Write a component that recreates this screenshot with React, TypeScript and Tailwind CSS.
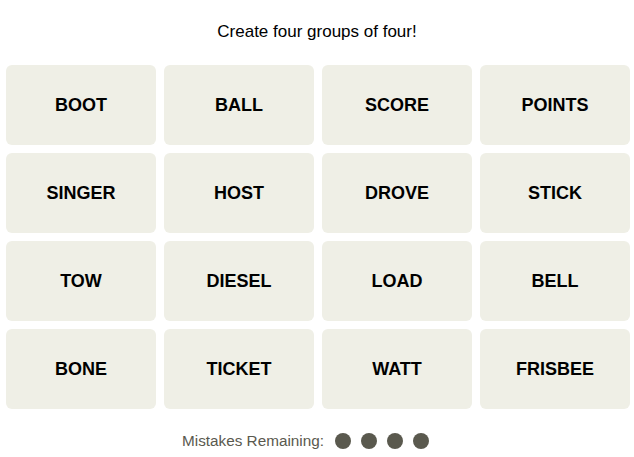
import React from 'react';

const WORDS = [
  'BOOT', 'BALL', 'SCORE', 'POINTS',
  'SINGER', 'HOST', 'DROVE', 'STICK',
  'TOW', 'DIESEL', 'LOAD', 'BELL',
  'BONE', 'TICKET', 'WATT', 'FRISBEE',
];

export default function App() {
  return (
    <div className="w-[634px] h-[457px] bg-white flex flex-col items-center font-['Liberation_Sans',Arial,sans-serif]">
      <p className="mt-[21px] h-[22px] text-[17px] leading-[22px] text-black">Create four groups of four!</p>

      <div className="mt-[22px] self-start ml-[6px] grid grid-cols-4 gap-2 w-[624px]">
        {WORDS.map(w => (
          <div
            key={w}
            className="h-[80px] rounded-md bg-[#efefe6] flex items-center justify-center text-[18px] font-bold text-black"
          >
            {w}
          </div>
        ))}
      </div>

      <div className="mt-[21px] self-start ml-[182px] flex items-center gap-[11px]">
        <span className="text-[15.3px] text-[#5a594e]">Mistakes Remaining:</span>
        <div className="flex gap-[10px]">
          {[0, 1, 2, 3].map(i => (
            <span key={i} className="w-4 h-4 rounded-full bg-[#5a594e]" />
          ))}
        </div>
      </div>
    </div>
  );
}
